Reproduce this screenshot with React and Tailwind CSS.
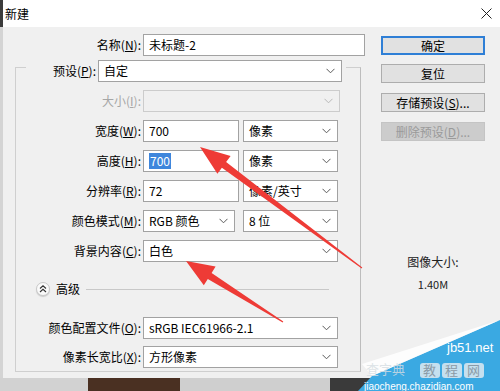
import { useState } from "react";

const FONT = "font-['Noto_Sans_CJK_SC','Microsoft_YaHei',sans-serif]";

function Chevron({ light }) {
  return (
    <svg width="9" height="6" viewBox="0 0 9 6" className="shrink-0">
      <polyline
        points="0.5,0.8 4.5,4.8 8.5,0.8"
        fill="none"
        stroke={light ? "#b8b8b8" : "#5a5a5a"}
        strokeWidth="1"
      />
    </svg>
  );
}

function Select({ value, width, disabled }) {
  return (
    <div
      className={`h-[22px] flex items-center justify-between pl-[5px] pr-[6px] border ${
        disabled ? "bg-[#f0f0f0] border-[#cccccc]" : "bg-white border-[#a2a2a2]"
      }`}
      style={{ width }}
    >
      <span className="text-[12px] leading-none text-black whitespace-nowrap">{value}</span>
      <Chevron light={disabled} />
    </div>
  );
}

function Input({ value, width, selected }) {
  return (
    <div
      className="h-[22px] flex items-center pl-[5px] bg-white border border-[#a2a2a2]"
      style={{ width }}
    >
      {selected ? (
        <span className="text-[12px] leading-[16px] px-[1px] bg-[#3e86dc] text-white">{value}</span>
      ) : (
        <span className="text-[12px] leading-none text-black whitespace-nowrap">{value}</span>
      )}
    </div>
  );
}

function Label({ text, mn, w = 125, disabled }) {
  return (
    <span
      className={`shrink-0 text-right text-[12px] leading-none whitespace-nowrap ${
        disabled ? "text-[#a6a6a6]" : "text-black"
      }`}
      style={{ width: w }}
    >
      {text}(<u>{mn}</u>):
    </span>
  );
}

function Row({ children, className = "" }) {
  return <div className={`flex items-center h-[22px] ${className}`}>{children}</div>;
}

function Button({ children, primary, disabled, className = "" }) {
  return (
    <div
      className={`w-[104px] h-[19px] flex items-center justify-center text-[12px] leading-none ${
        primary
          ? "border-2 border-[#2f7fd6] bg-[#e1e1e1] text-black"
          : disabled
          ? "border border-[#c4c4c4] bg-[#cccccc] text-[#9a9a9a]"
          : "border border-[#adadad] bg-[#e1e1e1] text-black"
      } ${className}`}
    >
      {children}
    </div>
  );
}

export default function App() {
  const [name] = useState("未标题-2");

  return (
    <div className={`relative w-[500px] h-[391px] overflow-hidden bg-[#cfcfcf] ${FONT}`}>
      <div className="flex h-[378px]">
        {/* left backdrop strip */}
        <div className="w-[3px] flex flex-col">
          <div className="h-[27px] bg-[#3c3c3c]" />
          <div className="flex-1 bg-[#d4d4d4]" />
        </div>

        {/* dialog */}
        <div className="flex-1 flex flex-col bg-[#f0f0f0]">
          <div className="h-[27px] bg-white flex items-center justify-between pl-[2px] pr-[8px]">
            <span className="text-[12px] leading-none text-black">新建</span>
            <svg width="11" height="11" viewBox="0 0 11 11">
              <line x1="0.5" y1="0.5" x2="10.5" y2="10.5" stroke="#222" strokeWidth="1" />
              <line x1="10.5" y1="0.5" x2="0.5" y2="10.5" stroke="#222" strokeWidth="1" />
            </svg>
          </div>

          <div className="flex flex-1">
            {/* left column */}
            <div className="w-[362px] pl-[12px] pt-[7px]">
              <Row>
                <Label text="名称" mn="N" w={126} />
                <div className="ml-[2px]">
                  <Input value={name} width={222} />
                </div>
              </Row>

              <div className="mt-[11px] w-[346px] border border-[#cfcfcf] border-r-[#bdbdbd] pb-[3px]">
                <Row className="-mt-[8px] ml-[10px] w-[320px] bg-[#f0f0f0]">
                  <Label text="预设" mn="P" w={70} />
                  <div className="ml-[2px]">
                    <Select value="自定" width={244} />
                  </div>
                </Row>

                <Row className="mt-[8px]">
                  <Label text="大小" mn="I" disabled />
                  <div className="ml-[2px]">
                    <Select value="" width={197} disabled />
                  </div>
                </Row>

                <Row className="mt-[8px]">
                  <Label text="宽度" mn="W" />
                  <div className="ml-[2px] flex gap-[4px]">
                    <Input value="700" width={96} />
                    <Select value="像素" width={95} />
                  </div>
                </Row>

                <Row className="mt-[8px]">
                  <Label text="高度" mn="H" />
                  <div className="ml-[2px] flex gap-[4px]">
                    <Input value="700" width={96} selected />
                    <Select value="像素" width={95} />
                  </div>
                </Row>

                <Row className="mt-[8px]">
                  <Label text="分辨率" mn="R" />
                  <div className="ml-[2px] flex gap-[4px]">
                    <Input value="72" width={96} />
                    <Select value="像素/英寸" width={95} />
                  </div>
                </Row>

                <Row className="mt-[8px]">
                  <Label text="颜色模式" mn="M" />
                  <div className="ml-[2px] flex gap-[8px]">
                    <Select value="RGB 颜色" width={92} />
                    <Select value="8 位" width={95} />
                  </div>
                </Row>

                <Row className="mt-[8px]">
                  <Label text="背景内容" mn="C" />
                  <div className="ml-[2px]">
                    <Select value="白色" width={195} />
                  </div>
                </Row>

                <div className="mt-[20px] h-[14px] flex items-center pl-[20px]">
                  <div className="w-[14px] h-[14px] rounded-full bg-[#fafafa] border border-[#c9c9c9] shadow-[0_1px_1px_rgba(0,0,0,0.15)] flex items-center justify-center">
                    <svg width="8" height="8" viewBox="0 0 8 8">
                      <polyline points="1,3.5 4,0.8 7,3.5" fill="none" stroke="#333" strokeWidth="1.1" />
                      <polyline points="1,7 4,4.3 7,7" fill="none" stroke="#333" strokeWidth="1.1" />
                    </svg>
                  </div>
                  <span className="ml-[6px] text-[12px] leading-none text-black">高级</span>
                  <div className="ml-[6px] w-[243px] h-px bg-[#c8c8c8]" />
                </div>

                <Row className="mt-[21px]">
                  <Label text="颜色配置文件" mn="O" />
                  <div className="ml-[2px]">
                    <Select value="sRGB IEC61966-2.1" width={195} />
                  </div>
                </Row>

                <Row className="mt-[7px]">
                  <Label text="像素长宽比" mn="X" />
                  <div className="ml-[2px]">
                    <Select value="方形像素" width={195} />
                  </div>
                </Row>
              </div>
            </div>

            {/* right column */}
            <div className="ml-[16px] pt-[9px] flex flex-col items-center w-[104px]">
              <Button primary>确定</Button>
              <Button className="mt-[9px]">复位</Button>
              <Button className="mt-[10px]">
                存储预设(<u>S</u>)...
              </Button>
              <Button className="mt-[10px]" disabled>
                删除预设(<u>D</u>)...
              </Button>
              <span className="mt-[113px] text-[12px] leading-[16px] text-[#222]">图像大小:</span>
              <span className="mt-[7px] text-[11px] leading-[14px] text-[#222]">1.40M</span>
            </div>
          </div>
        </div>
      </div>

      {/* backdrop below the dialog */}
      <div className="flex h-[13px]">
        <div className="w-[88px] bg-[#d2d2d2]" />
        <div className="w-[92px] bg-[#4a3022]" />
        <div className="w-[150px] bg-[#cfcfcf]" />
        <div className="flex-1 bg-[#3a3a3a]" />
      </div>

      {/* annotation arrows + watermark */}
      <svg className="absolute inset-0 pointer-events-none" width="500" height="391" viewBox="0 0 500 391">
        <polygon
          points="362.3,267.6 226.1,162.1 230.6,156.1 200,147 217.4,173.7 221.9,167.7 361.7,268.4"
          fill="#ee3b36"
        />
        <polygon
          points="283.3,321.6 211.6,272.9 215.6,266.6 186,261 203.8,285.2 207.8,278.9 282.7,322.4"
          fill="#ee3b36"
        />
        <polygon points="500,320 500,391 358,391 372,376" fill="#3aa9e2" />
        <polygon points="362,364 500,320 372,376" fill="#ffffff" opacity="0.85" />
        <text x="447" y="352" fill="#ffffff" fontSize="13" fontFamily="Liberation Sans, sans-serif">jb51.net</text>
        <rect x="420" y="363" width="20" height="15" rx="3" fill="#e8eef2" opacity="0.8" />
        <rect x="442" y="363" width="20" height="15" rx="3" fill="#e8eef2" opacity="0.8" />
        <rect x="464" y="363" width="20" height="15" rx="3" fill="#e8eef2" opacity="0.8" />
        <text x="423" y="375" fill="#8a9aa6" fontSize="13" fontFamily="Noto Sans CJK SC, sans-serif" letterSpacing="9">教程网</text>
        <text x="366" y="374" fill="#d6dde2" fontSize="13" fontFamily="Noto Sans CJK SC, sans-serif" opacity="0.8">查字典</text>
        <text x="364" y="390" fill="#ffffff" fontSize="10" fontFamily="Liberation Sans, sans-serif">jiaocheng.chazidian.com</text>
      </svg>
    </div>
  );
}
